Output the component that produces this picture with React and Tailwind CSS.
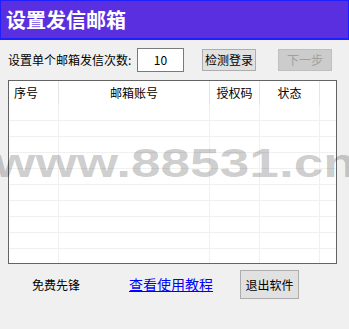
const cols = ['w-[50px]', 'w-[151px]', 'w-[50px]', 'w-[60px]', 'flex-1'];
const heads = ['序号', '邮箱账号', '授权码', '状态', ''];
const font = { fontFamily: '"Noto Sans CJK SC", "Liberation Sans", sans-serif' };

export default function App() {
  const rows = Array.from({ length: 10 });

  return (
    <div className="relative w-[349px] h-[329px] overflow-hidden bg-[#f0f0f0] text-black" style={font}>
      <div className="h-[40px] bg-[#5a2fe0] border border-b-2 border-[#1f1fff] flex items-center pl-[5px]">
        <span className="text-[20px] font-bold text-white leading-none">设置发信邮箱</span>
      </div>

      <div className="flex items-center mt-[8px] h-[24px] text-[12px]">
        <span className="ml-[8px] w-[129px]">设置单个邮箱发信次数:</span>
        <div className="w-[47px] h-[24px] bg-white border border-[#7a7a7a] flex items-center justify-center">10</div>
        <button className="ml-[18px] w-[54px] h-[22px] bg-[#e1e1e1] border border-[#adadad] text-[12px] leading-none">检测登录</button>
        <button className="ml-[22px] w-[54px] h-[22px] bg-[#cccccc] border border-[#bfbfbf] text-[#a0a0a0] text-[12px] leading-none">下一步</button>
      </div>

      <div className="mt-[8px] ml-[8px] w-[329px] h-[184px] bg-white border border-[#646464] overflow-hidden text-[12px]">
        <div className="flex h-[24px]">
          {heads.map((h, i) => (
            <div key={i} className={`${cols[i]} h-full flex items-center ${i === 0 ? 'pl-[5px]' : 'justify-center'} ${i < 4 ? 'border-r border-[#e5e5e5]' : ''}`}>
              {h}
            </div>
          ))}
        </div>
        {rows.map((_, r) => (
          <div key={r} className="flex h-[16px] border-b border-[#f0f0f0]">
            {cols.map((c, i) => (
              <div key={i} className={`${c} h-full ${i < 4 ? 'border-r border-[#f0f0f0]' : ''}`} />
            ))}
          </div>
        ))}
      </div>

      <div className="flex items-center mt-[6px] h-[29px]">
        <span className="ml-[32px] text-[12px]">免费先锋</span>
        <a href="#" className="ml-[49px] text-[14px] text-[#0000ff] underline">查看使用教程</a>
        <button className="ml-[27px] w-[59px] h-[29px] bg-[#e1e1e1] border border-[#adadad] text-[12px]">退出软件</button>
      </div>

      <div
        className="absolute left-[-6px] top-[143px] text-[40px] leading-[40px] font-bold text-[rgba(0,0,0,0.21)] whitespace-nowrap pointer-events-none origin-left scale-x-[1.33]"
        style={{ fontFamily: '"Liberation Sans", sans-serif' }}
      >
        www.88531.cn
      </div>
    </div>
  );
}
